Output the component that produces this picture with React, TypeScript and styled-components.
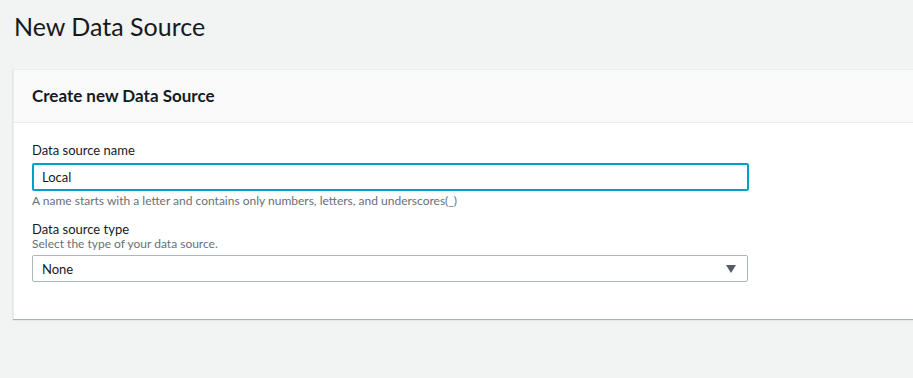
import React from "react";
import styled, { createGlobalStyle } from "styled-components";

const GlobalStyle = createGlobalStyle`
  html, body {
    margin: 0;
    padding: 0;
    background: #f2f3f3;
    font-family: Lato, "Liberation Sans", sans-serif;
    color: #16191f;
  }
`;

const Page = styled.div`
  min-height: 378px;
  padding: 9px 0 0 13px;
  box-sizing: border-box;
  overflow: hidden;
`;

const Title = styled.h1`
  margin: 0 0 0 1px;
  font-size: 25px;
  font-weight: 400;
  line-height: 34px;
  color: #16191f;
`;

const Panel = styled.section`
  margin-top: 26px;
  width: 1000px;
  background: #fff;
  border-left: 1px solid #eaeded;
  border-top: 1px solid #eaeded;
  box-shadow: 0 1px 1px 0 rgba(0, 28, 36, 0.3);
`;

const PanelHeader = styled.header`
  height: 52px;
  display: flex;
  align-items: center;
  padding: 0 18px;
  background: #fafafa;
  border-bottom: 1px solid #eaeded;
`;

const PanelTitle = styled.h2`
  margin: 0;
  font-size: 17px;
  font-weight: 700;
  line-height: 22px;
`;

const PanelBody = styled.div`
  padding: 20px 18px 37px;
  display: flex;
  flex-direction: column;
`;

const Field = styled.div<{ $gap?: number }>`
  display: flex;
  flex-direction: column;
  width: 717px;
  margin-top: ${(p) => p.$gap ?? 0}px;
`;

const Label = styled.label`
  font-size: 13px;
  line-height: 15px;
  color: #16191f;
`;

const Hint = styled.div<{ $gap?: number }>`
  margin-top: ${(p) => p.$gap ?? 0}px;
  font-size: 12px;
  line-height: 13px;
  color: #687078;
`;

const TextInput = styled.input`
  box-sizing: border-box;
  height: 28px;
  width: 100%;
  margin: 5px 0 0;
  padding: 0 8px;
  border: 2px solid #00a1c9;
  border-radius: 2px;
  font-family: inherit;
  font-size: 13px;
  color: #16191f;
  outline: none;
`;

const SelectBox = styled.div`
  box-sizing: border-box;
  height: 27px;
  width: 716px;
  margin-top: 5px;
  padding: 0 11px 0 9px;
  display: flex;
  align-items: center;
  justify-content: space-between;
  border: 1px solid #aab7b8;
  border-radius: 2px;
  font-size: 13px;
  color: #16191f;
`;

const Caret = () => (
  <svg width="10" height="8" viewBox="0 0 10 8">
    <path d="M0 0h10L5 8z" fill="#545b64" />
  </svg>
);

export default function App() {
  return (
    <Page>
      <GlobalStyle />
      <Title>New Data Source</Title>
      <Panel>
        <PanelHeader>
          <PanelTitle>Create new Data Source</PanelTitle>
        </PanelHeader>
        <PanelBody>
          <Field>
            <Label>Data source name</Label>
            <TextInput defaultValue="Local" />
            <Hint $gap={3}>
              A name starts with a letter and contains only numbers, letters, and underscores(_)
            </Hint>
          </Field>
          <Field $gap={15}>
            <Label>Data source type</Label>
            <Hint>Select the type of your data source.</Hint>
            <SelectBox>
              <span>None</span>
              <Caret />
            </SelectBox>
          </Field>
        </PanelBody>
      </Panel>
    </Page>
  );
}
